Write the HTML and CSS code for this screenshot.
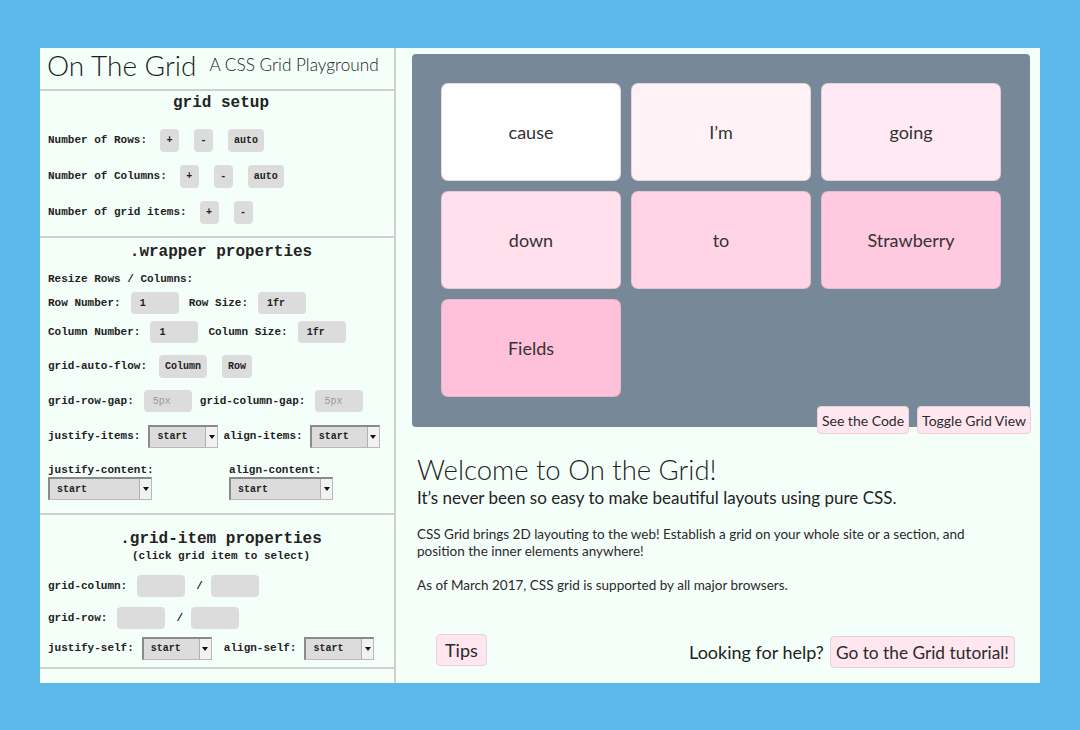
FILE: index.html
```html
<!DOCTYPE html>
<html>
<head>
<meta charset="utf-8">
<link rel="stylesheet" href="styles.css">
</head>
<body>
<div class="app">
  <aside class="panel">
    <section class="sec head">
      <h1 class="logo">On The Grid</h1>
      <span class="tagline">A CSS Grid Playground</span>
    </section>

    <section class="sec setup">
      <h2 class="sec-title">grid setup</h2>
      <div class="row r-first"><span class="lbl">Number of Rows:</span><span class="btn sq first">+</span><span class="btn sq">-</span><span class="btn">auto</span></div>
      <div class="row r-12"><span class="lbl">Number of Columns:</span><span class="btn sq first">+</span><span class="btn sq">-</span><span class="btn">auto</span></div>
      <div class="row r-13"><span class="lbl">Number of grid items:</span><span class="btn sq first">+</span><span class="btn sq">-</span></div>
    </section>

    <section class="sec wrapper">
      <h2 class="sec-title">.wrapper properties</h2>
      <div class="sub-lbl">Resize Rows / Columns:</div>
      <div class="row m4"><span class="lbl">Row Number:</span><span class="inp">1</span><span class="lbl">Row Size:</span><span class="inp">1fr</span></div>
      <div class="row m5"><span class="lbl">Column Number:</span><span class="inp">1</span><span class="lbl">Column Size:</span><span class="inp">1fr</span></div>
      <div class="row m10 flow"><span class="lbl">grid-auto-flow:</span><span class="btn first-flow">Column</span><span class="btn">Row</span></div>
      <div class="row m11 gaps"><span class="lbl">grid-row-gap:</span><span class="inp ph">5px</span><span class="lbl">grid-column-gap:</span><span class="inp ph">5px</span></div>
      <div class="row m11 sel-row"><span class="lbl">justify-items:</span><span class="sel"><span class="sel-val">start</span><span class="arrow"></span></span><span class="lbl">align-items:</span><span class="sel"><span class="sel-val">start</span><span class="arrow"></span></span></div>
      <div class="cols">
        <div class="col"><div class="lbl">justify-content:</div><span class="sel wide"><span class="sel-val">start</span><span class="arrow"></span></span></div>
        <div class="col"><div class="lbl">align-content:</div><span class="sel wide"><span class="sel-val">start</span><span class="arrow"></span></span></div>
      </div>
    </section>

    <section class="sec item">
      <h2 class="sec-title">.grid-item properties</h2>
      <div class="note">(click grid item to select)</div>
      <div class="row m11 pair"><span class="lbl">grid-column:</span><span class="inp"></span><span class="slash">/</span><span class="inp inp2"></span></div>
      <div class="row m8 pair"><span class="lbl">grid-row:</span><span class="inp"></span><span class="slash">/</span><span class="inp inp2"></span></div>
      <div class="row m6 sel-row self"><span class="lbl">justify-self:</span><span class="sel"><span class="sel-val">start</span><span class="arrow"></span></span><span class="lbl">align-self:</span><span class="sel"><span class="sel-val">start</span><span class="arrow"></span></span></div>
    </section>
  </aside>

  <main class="main">
    <div class="board">
      <div class="grid">
        <div class="cell c1">cause</div>
        <div class="cell c2">I’m</div>
        <div class="cell c3">going</div>
        <div class="cell c4">down</div>
        <div class="cell c5">to</div>
        <div class="cell c6">Strawberry</div>
        <div class="cell c7">Fields</div>
      </div>
      <div class="board-btns">
        <span class="pbtn">See the Code</span>
        <span class="pbtn">Toggle Grid View</span>
      </div>
    </div>

    <div class="intro">
      <h2 class="welcome">Welcome to On the Grid!</h2>
      <p class="lead">It’s never been so easy to make beautiful layouts using pure CSS.</p>
      <p class="txt first-txt">CSS Grid brings 2D layouting to the web! Establish a grid on your whole site or a section, and position the inner elements anywhere!</p>
      <p class="txt">As of March 2017, CSS grid is supported by all major browsers.</p>
    </div>

    <div class="foot">
      <span class="pbtn big tips">Tips</span>
      <div class="help"><span>Looking for help?</span><span class="pbtn big">Go to the Grid tutorial!</span></div>
    </div>
  </main>
</div>
</body>
</html>
```

FILE: styles.css
```css
* { box-sizing: border-box; }
html, body { margin: 0; padding: 0; }
body {
  background: #5cb8e9;
  width: 1080px;
  height: 730px;
  padding: 48px 40px 47px 40px;
  font-family: "Lato", "Noto Sans", sans-serif;
  color: #222;
}
.app {
  width: 1000px;
  height: 635px;
  background: #f5fffa;
  display: flex;
}
.panel {
  width: 356px;
  flex: none;
  border-right: 2px solid #cfcfcf;
  font-family: "Liberation Mono", "Courier New", monospace;
  color: #222;
}
.sec { border-bottom: 2px solid #cfcfcf; }
.head {
  height: 43px;
  display: flex;
  align-items: center;
  padding: 0 0 8px 7px;
  font-family: "Lato", "Noto Sans", sans-serif;
  white-space: nowrap;
}
.logo {
  flex: none;
  margin: 0;
  font-weight: 300;
  font-size: 28px;
  line-height: 34px;
  color: #1d1d1d;
  white-space: nowrap;
}
.tagline {
  flex: none;
  margin-left: 13px;
  font-size: 17.2px;
  font-weight: 300;
  color: #222;
  white-space: nowrap;
}
.sec-title {
  margin: 0;
  text-align: center;
  font-size: 16px;
  line-height: 20px;
  font-weight: bold;
}
.setup { padding: 2px 0 12px 8px; }
.row {
  display: flex;
  align-items: center;
  height: 24px;
  font-size: 11px;
  font-weight: bold;
}
.lbl { font-size: 11px; font-weight: bold; line-height: 16px; white-space: nowrap; }
.r-first { margin-top: 15px; }
.r-12 { margin-top: 12px; }
.r-13 { margin-top: 12px; }
.m4 { margin-top: 4px; }
.m5 { margin-top: 5px; }
.m6 { margin-top: 6px; }
.m8 { margin-top: 8px; }
.m10 { margin-top: 10px; }
.m11 { margin-top: 11px; }

.btn {
  display: inline-flex;
  align-items: center;
  justify-content: center;
  height: 23px;
  padding: 0 6px;
  background: #dcdcdc;
  border-radius: 4px;
  font-size: 10px;
  font-weight: bold;
  margin-left: 15px;
  color: #222;
}
.btn.sq { width: 19px; padding: 0; }
.btn.first { margin-left: 13px; }
.btn.first-flow { margin-left: 12px; }

.wrapper { padding: 4px 0 13px 8px; }
.sub-lbl { margin-top: 9px; font-size: 11px; font-weight: bold; line-height: 16px; }
.inp {
  display: inline-flex;
  align-items: center;
  width: 48px;
  height: 22px;
  padding-left: 9px;
  background: #dcdcdc;
  border-radius: 4px;
  font-size: 10px;
  font-weight: bold;
  margin: 0 10px;
  color: #222;
}
.inp.ph { color: #9a9a9a; font-weight: normal; }
.gaps .inp { margin: 0 8px 0 10px; }

.sel {
  position: relative;
  display: inline-flex;
  align-items: center;
  width: 70px;
  height: 23px;
  background: #dcdcdc;
  border-top: 2px solid #8a8a8a;
  border-left: 2px solid #8a8a8a;
  border-bottom: 1px solid #b9b9b9;
  border-right: 1px solid #b9b9b9;
  font-size: 10px;
  font-weight: bold;
  margin: 0 5px 0 8px;
}
.sel-row .sel + .lbl + .sel { margin-left: 7px; }
.sel-val { padding-left: 7px; flex: 1; }
.arrow {
  width: 12px;
  height: 20px;
  background: #f2f2f2;
  border-left: 1px solid #b0b0b0;
  display: flex;
  align-items: center;
  justify-content: center;
}
.arrow::after {
  content: "";
  border-left: 3px solid transparent;
  border-right: 3px solid transparent;
  border-top: 4px solid #111;
}
.sel.wide { width: 104px; margin: 0; }
.cols { display: flex; margin-top: 15px; }
.col { width: 181px; flex: none; }
.col .lbl { line-height: 14px; }

.item { padding: 14px 0 7px 8px; }
.note { text-align: center; font-size: 11px; font-weight: bold; line-height: 14px; }
.pair .inp { margin: 0 11px 0 10px; }
.pair .inp2 { margin-left: 8px; }
.pair .slash { font-size: 11px; }
.self .sel { margin: 0 12px 0 8px; }
.self .sel + .lbl + .sel { margin-left: 8px; }

.main {
  flex: 1;
  min-width: 0;
  display: flex;
  flex-direction: column;
}
.board {
  position: relative;
  margin: 6px 10px 0 16px;
  height: 373px;
  background: #778899;
  border-radius: 4px;
  padding: 29px;
}
.grid {
  display: grid;
  grid-template-columns: repeat(3, 180px);
  grid-template-rows: repeat(3, 98px);
  gap: 10px 10px;
}
.cell {
  display: flex;
  align-items: center;
  justify-content: center;
  border-radius: 7px;
  border: 1px solid rgba(200, 170, 185, 0.45);
  font-size: 18px;
  font-weight: 400;
  color: #333;
}
.c1 { background: #ffffff; }
.c2 { background: #fff2f7; }
.c3 { background: #ffeaf3; }
.c4 { background: #ffe0ec; }
.c5 { background: #ffd5e6; }
.c6 { background: #ffc9df; }
.c7 { background: #ffc0da; }
.board-btns {
  position: absolute;
  right: -1px;
  bottom: -7px;
  display: flex;
  gap: 8px;
}
.pbtn {
  display: inline-flex;
  align-items: center;
  height: 28px;
  padding: 0 4px;
  background: #ffe6ef;
  border: 1px solid #e6d2da;
  border-radius: 4px;
  font-size: 14px;
  color: #2b2b2b;
}
.intro { padding: 27px 0 0 21px; }
.welcome {
  margin: 0;
  font-size: 27.5px;
  font-weight: 300;
  line-height: 32px;
  color: #1e1e1e;
}
.lead {
  margin: 2px 0 0 0;
  font-size: 17px;
  line-height: 20px;
  color: #222;
}
.txt {
  margin: 17px 0 0 0;
  font-size: 13.5px;
  line-height: 17px;
  width: 580px;
  color: #2a2a2a;
}
.txt.first-txt { margin-top: 18px; }
.foot {
  margin-top: auto;
  margin-bottom: 17px;
  display: flex;
  align-items: flex-end;
  justify-content: space-between;
  padding: 0 25px 0 40px;
}
.pbtn.big { height: 32px; font-size: 17.3px; padding: 0 5px; }
.pbtn.tips { font-size: 18px; padding: 0 8px; }
.help { display: flex; align-items: center; gap: 6px; font-size: 18px; margin-bottom: -2px; }
```
